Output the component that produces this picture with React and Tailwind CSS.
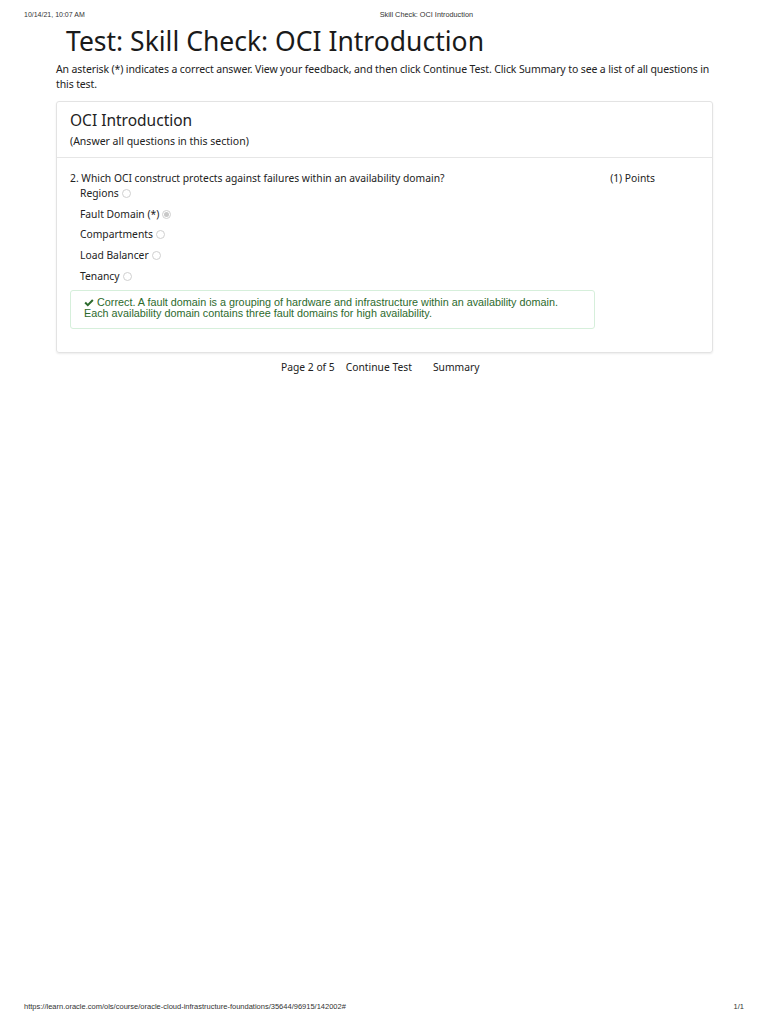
import React from 'react';

const options = [
  { label: 'Regions', checked: false },
  { label: 'Fault Domain (*)', checked: true },
  { label: 'Compartments', checked: false },
  { label: 'Load Balancer', checked: false },
  { label: 'Tenancy', checked: false },
];

export default function App() {
  return (
    <div className="w-[768px] h-[1024px] bg-white flex flex-col text-[#222] font-['Noto_Sans',sans-serif]">
      {/* Print header */}
      <div className="flex items-center px-[24px] pt-[10px] h-[20px] text-[7px] font-['Liberation_Sans',sans-serif] text-[#333]">
        <span>10/14/21, 10:07 AM</span>
        <span className="ml-[295px] text-[7.3px]">Skill Check: OCI Introduction</span>
      </div>

      <div className="flex-1 px-[56px] w-[769px]">
        <h1 className="pl-[10px] text-[26.5px] leading-[36px] mt-[3px] text-[#1a1a1a]">
          Test: Skill Check: OCI Introduction
        </h1>
        <p className="mt-[3px] w-[665px] text-[10.5px] tracking-[-0.12px] leading-[15px] text-[#222]">
          An asterisk (*) indicates a correct answer. View your feedback, and then click Continue Test. Click Summary to see a list of all questions in this test.
        </p>

        {/* Section card */}
        <div className="mt-[9px] w-[657px] border border-[#e3e3e3] rounded-[3px] shadow-[0_1px_2px_rgba(0,0,0,0.08)]">
          <div className="px-[13px] pt-[7px] pb-[8px] border-b border-[#e6e6e6]">
            <h2 className="text-[15.5px] leading-[22px]">OCI Introduction</h2>
            <p className="text-[10.5px] leading-[16px] mt-[2px]">(Answer all questions in this section)</p>
          </div>

          <div className="px-[13px] pt-[13px] pb-[23px]">
            <div className="flex justify-between text-[10.3px] leading-[15px]">
              <span>2. Which OCI construct protects against failures within an availability domain?</span>
              <span className="mr-[44px]">(1) Points</span>
            </div>
            <ul className="pl-[10px] text-[10.3px]">
              {options.map((o, i) => (
                <li key={o.label} className={`flex items-center gap-[3px] leading-[15px] ${i === 0 ? 'mt-0' : 'mt-[5.7px]'}`}>
                  <span>{o.label}</span>
                  <span className="w-[9px] h-[9px] rounded-full border border-[#d0d0d0] flex items-center justify-center">
                    {o.checked && <span className="w-[5px] h-[5px] rounded-full bg-[#c8c8c8]" />}
                  </span>
                </li>
              ))}
            </ul>

            <div className="mt-[6px] w-[525px] border border-[#d6efdb] rounded-[3px] px-[13px] pt-[6px] pb-[8px] font-['Liberation_Sans',sans-serif] text-[10.8px] leading-[11.5px] text-[#2d6a2d]">
              <div className="flex items-center gap-[3px]">
                <svg width="10" height="8" viewBox="0 0 12 10" fill="#2d6a2d">
                  <path d="M0.3 5.3 L2.1 3.5 L4.5 5.9 L9.9 0.4 L11.7 2.2 L4.5 9.4 Z" />
                </svg>
                <span>Correct. A fault domain is a grouping of hardware and infrastructure within an availability domain.</span>
              </div>
              <div>Each availability domain contains three fault domains for high availability.</div>
            </div>
          </div>
        </div>

        {/* Pager */}
        <div className="flex items-center pl-[225px] mt-[7px] text-[10.3px] leading-[15px] text-[#222]">
          <span>Page 2 of 5</span>
          <span className="ml-[11px]">Continue Test</span>
          <span className="ml-[21px]">Summary</span>
        </div>
      </div>

      {/* Print footer */}
      <div className="flex justify-between items-center px-[24px] h-[20px] mb-[7px] text-[7.5px] font-['Liberation_Sans',sans-serif] text-[#333]">
        <span>https://learn.oracle.com/ols/course/oracle-cloud-infrastructure-foundations/35644/96915/142002#</span>
        <span>1/1</span>
      </div>
    </div>
  );
}
